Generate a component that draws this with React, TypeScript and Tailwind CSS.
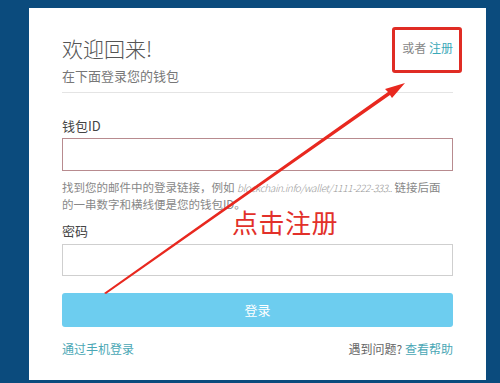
export default function App() {
  return (
    <div className="relative w-[500px] h-[383px] overflow-hidden bg-[#0b4b7d] pt-[8px] pl-[29px] font-['Noto_Sans_CJK_SC','Noto_Sans',sans-serif]">
      <div className="w-[457px] h-[372px] bg-white px-[33px] pt-[26px]">
        <div className="flex items-start justify-between">
          <div>
            <h1 className="text-[21px] leading-[28px] font-light text-[#555]">欢迎回来!</h1>
            <p className="mt-[4px] text-[13px] leading-[20px] text-[#777]">在下面登录您的钱包</p>
          </div>
          <div className="pt-[6px] text-[12px] leading-[16px] text-[#888]">
            或者 <span className="text-[#3aa9b8]">注册</span>
          </div>
        </div>
        <div className="mt-[6px] h-px bg-[#e4e4e4]" />

        <label className="mt-[24px] block text-[13px] leading-[18px] text-[#444]">钱包ID</label>
        <div className="mt-[3px] h-[33px] border border-[#b88b8f] bg-white" />
        <p className="mt-[8px] text-[11.5px] leading-[16px] text-[#888]">
          <span className="block whitespace-nowrap">
            找到您的邮件中的登录链接，例如{" "}
            <i className="font-light text-[10px] tracking-[-0.4px] text-[#999]">blockchain.info/wallet/1111-222-333..</i> 链接后面
          </span>
          <span className="block">的一串数字和横线便是您的钱包ID。</span>
        </p>

        <label className="mt-[10px] block text-[13px] leading-[18px] text-[#444]">密码</label>
        <div className="mt-[4px] h-[32px] border border-[#cfcfcf] bg-white" />

        <button className="mt-[17px] h-[34px] w-full rounded-[3px] bg-[#6dcdef] text-[13px] text-white">登录</button>

        <div className="mt-[14px] flex items-center justify-between text-[12px] leading-[16px]">
          <span className="text-[#4aa7b5]">通过手机登录</span>
          <span className="text-[#666]">
            遇到问题? <span className="text-[#4aa7b5]">查看帮助</span>
          </span>
        </div>
      </div>

      <div className="absolute left-[392px] top-[27px] h-[46px] w-[70px] rounded-[3px] border-[3px] border-[#e02c24]" />
      <svg className="absolute left-0 top-0" width="500" height="383" viewBox="0 0 500 383">
        <polygon points="104,293 106,294 390,95 392,98 405,83 385,89 388,92" fill="#e8281f" />
      </svg>
      <div className="absolute left-[232px] top-[206px] text-[26px] leading-[32px] text-[#e2302a] tracking-[0.5px]">点击注册</div>
    </div>
  );
}
